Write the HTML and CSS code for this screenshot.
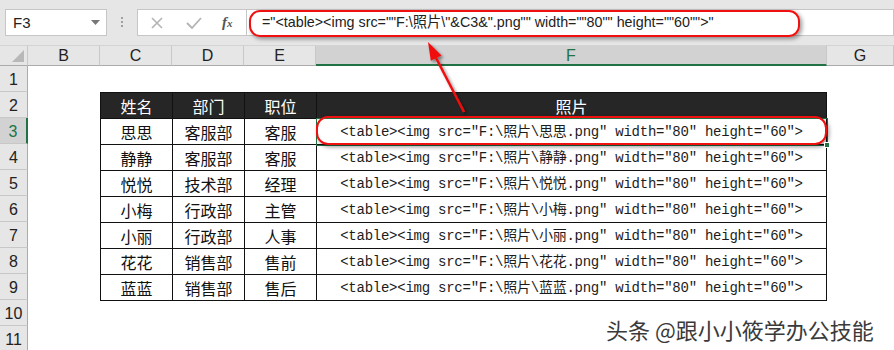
FILE: index.html
```html
<!DOCTYPE html>
<html lang="zh-CN">
<head>
    <meta charset="UTF-8">
    <title>照片路径公式</title>
    <link rel="stylesheet" href="styles.css">
</head>
<body>

    <!-- 编辑栏 -->
    <div class="toolbar">
        <div class="namebox">
            <span>F3</span>
            <svg class="dropdown" width="9" height="5" viewBox="0 0 9 5"><path d="M0 0 L9 0 L4.5 5 Z" fill="#777"/></svg>
        </div>
        <div class="grip"><span></span><span></span><span></span></div>
        <div class="fx-buttons">
            <svg class="btn-cancel" width="12" height="12" viewBox="0 0 12 12"><path d="M1 1 L11 11 M11 1 L1 11" stroke="#b4b4b4" stroke-width="1.6" fill="none"/></svg>
            <svg class="btn-enter" width="16" height="12" viewBox="0 0 16 12"><path d="M1 6 L6 11 L15 1" stroke="#b4b4b4" stroke-width="1.8" fill="none"/></svg>
            <span class="fx">f<small>x</small></span>
        </div>
        <div class="formula">
            <span class="formula-text">="&lt;table&gt;&lt;img src=""F:\照片\"&amp;C3&amp;".png"" width=""80"" height=""60""&gt;"</span>
            <div class="mark mark-formula"></div>
        </div>
    </div>

    <!-- 工作表 -->
    <div class="sheet">
        <div class="corner"><svg width="12" height="12" viewBox="0 0 12 12"><path d="M12 0 L12 12 L0 12 Z" fill="#b8b8b8"/></svg></div>
        <div class="col-head">B</div>
        <div class="col-head">C</div>
        <div class="col-head">D</div>
        <div class="col-head">E</div>
        <div class="col-head selected">F</div>
        <div class="col-head">G</div>

        <div class="row-head">1</div>
        <div class="row-head">2</div>
        <div class="row-head selected">3</div>
        <div class="row-head">4</div>
        <div class="row-head">5</div>
        <div class="row-head">6</div>
        <div class="row-head">7</div>
        <div class="row-head">8</div>
        <div class="row-head">9</div>
        <div class="row-head">10</div>
        <div class="row-head">11</div>

        <table class="data">
            <colgroup>
                <col class="c-name"><col class="c-dept"><col class="c-pos"><col class="c-photo">
            </colgroup>
            <tr class="head">
                <td>姓名</td><td>部门</td><td>职位</td><td>照片</td>
            </tr>
            <tr>
                <td>思思</td><td>客服部</td><td>客服</td>
                <td class="code active">&lt;table&gt;&lt;img src="F:\照片\思思.png" width="80" height="60"&gt;<div class="mark mark-cell"></div><div class="handle"></div></td>
            </tr>
            <tr>
                <td>静静</td><td>客服部</td><td>客服</td>
                <td class="code">&lt;table&gt;&lt;img src="F:\照片\静静.png" width="80" height="60"&gt;</td>
            </tr>
            <tr>
                <td>悦悦</td><td>技术部</td><td>经理</td>
                <td class="code">&lt;table&gt;&lt;img src="F:\照片\悦悦.png" width="80" height="60"&gt;</td>
            </tr>
            <tr>
                <td>小梅</td><td>行政部</td><td>主管</td>
                <td class="code">&lt;table&gt;&lt;img src="F:\照片\小梅.png" width="80" height="60"&gt;</td>
            </tr>
            <tr>
                <td>小丽</td><td>行政部</td><td>人事</td>
                <td class="code">&lt;table&gt;&lt;img src="F:\照片\小丽.png" width="80" height="60"&gt;</td>
            </tr>
            <tr>
                <td>花花</td><td>销售部</td><td>售前</td>
                <td class="code">&lt;table&gt;&lt;img src="F:\照片\花花.png" width="80" height="60"&gt;</td>
            </tr>
            <tr>
                <td>蓝蓝</td><td>销售部</td><td>售后</td>
                <td class="code">&lt;table&gt;&lt;img src="F:\照片\蓝蓝.png" width="80" height="60"&gt;</td>
            </tr>
        </table>
    </div>

    <!-- 标注箭头 -->
    <svg class="arrow" width="894" height="350" viewBox="0 0 894 350">
        <defs>
            <filter id="shadow" x="-50%" y="-50%" width="200%" height="200%">
                <feDropShadow dx="2" dy="2" stdDeviation="1.5" flood-color="#000" flood-opacity="0.45"/>
            </filter>
        </defs>
        <g filter="url(#shadow)">
            <line x1="464" y1="112" x2="433" y2="52" stroke="#f01010" stroke-width="2.5"/>
            <path d="M428 42 L441.5 55.4 L430.8 60.8 Z" fill="#f01010"/>
        </g>
    </svg>

    <div class="watermark">头条 @跟小小筱学办公技能</div>

</body>
</html>
```

FILE: styles.css
```css
* {
    box-sizing: border-box;
}
body {
    margin: 0;
    width: 894px;
    height: 350px;
    overflow: hidden;
    position: relative;
    background: #fff;
    font-family: "Liberation Sans", "Noto Sans CJK SC", sans-serif;
    color: #222;
}

/* 编辑栏 */
.toolbar {
    height: 45px;
    background: #e6e6e6;
    display: flex;
    align-items: flex-start;
    padding: 9px 0 0 5px;
}
.namebox {
    width: 102px;
    height: 27px;
    background: #fff;
    border: 1px solid #c6c6c6;
    display: flex;
    align-items: center;
    justify-content: space-between;
    padding: 0 6px 0 7px;
    font-size: 15px;
}
.grip {
    width: 30px;
    height: 27px;
    display: flex;
    flex-direction: column;
    align-items: center;
    gap: 2px;
    padding-top: 8px;
}
.grip span {
    width: 2px;
    height: 2px;
    background: #a0a0a0;
}
.fx-buttons {
    width: 110px;
    height: 27px;
    background: #fff;
    border: 1px solid #c6c6c6;
    display: flex;
    align-items: center;
    padding-left: 13px;
}
.btn-enter {
    margin-left: 23px;
}
.fx {
    margin-left: 20px;
    font-family: "Liberation Serif", serif;
    font-style: italic;
    font-weight: bold;
    font-size: 15px;
    color: #555;
}
.fx small {
    font-size: 11px;
}
.formula {
    flex: 1;
    height: 27px;
    background: #fff;
    border: 1px solid #c6c6c6;
    border-left: none;
    position: relative;
    padding-left: 15px;
    font-size: 14.3px;
    line-height: 25px;
    white-space: nowrap;
}

/* 红色标注框 */
.mark {
    position: absolute;
    border: 2.5px solid #f01010;
    border-radius: 11px;
    box-shadow: 2px 2px 4px rgba(0, 0, 0, 0.4);
    pointer-events: none;
}
.mark-formula {
    left: 2px;
    top: 0;
    width: 551px;
    height: 27px;
}
.mark-cell {
    left: -1px;
    top: -3px;
    right: -1px;
    bottom: -1px;
    border-radius: 12px;
    z-index: 2;
}

/* 工作表 */
.sheet {
    display: grid;
    grid-template-columns: 28px 72px 72px 72px 72px 511px 1fr;
    grid-template-rows: 21px repeat(11, 26px);
}
.corner {
    background: #e6e6e6;
    border-right: 1px solid #c8c8c8;
    border-bottom: 1px solid #ababab;
    border-top: 1px solid #d4d4d4;
    display: flex;
    align-items: flex-end;
    justify-content: flex-end;
    padding: 0 3px 3px 0;
}
.col-head {
    background: #e6e6e6;
    border-top: 1px solid #d4d4d4;
    border-right: 1px solid #c8c8c8;
    border-bottom: 1px solid #ababab;
    text-align: center;
    font-size: 16px;
    line-height: 20px;
    color: #222;
}
.col-head.selected {
    background: #d2d2d2;
    border-bottom: 2px solid #217346;
    color: #217346;
}
.row-head {
    grid-column: 1;
    background: #e6e6e6;
    border-right: 1px solid #ababab;
    border-bottom: 1px solid #c8c8c8;
    text-align: center;
    font-size: 16px;
    line-height: 28px;
    color: #222;
}
.row-head.selected {
    background: #d2d2d2;
    border-right: 2px solid #217346;
    color: #217346;
}

/* 数据表 */
.data {
    grid-column: 3 / 7;
    grid-row: 3 / 11;
    border-collapse: collapse;
    table-layout: fixed;
    width: 727px;
    height: 208px;
    font-family: "Noto Sans CJK SC", sans-serif;
    font-size: 16px;
}
.c-name, .c-dept, .c-pos {
    width: 72px;
}
.data td {
    border: 1px solid #111;
    padding: 0;
    height: 26px;
    line-height: 24px;
    text-align: center;
    white-space: nowrap;
    color: #111;
}
.data .head td {
    background: #262626;
    color: #fff;
    border-color: #111;
}
.data td.code {
    font-family: "Liberation Mono", "Noto Sans CJK SC", monospace;
    font-size: 14px;
    letter-spacing: -0.25px;
    color: #1c1c1c;
}
.data td.active {
    position: relative;
    outline: 1px solid #217346;
}
.handle {
    position: absolute;
    right: -4px;
    bottom: -4px;
    width: 6px;
    height: 6px;
    background: #217346;
    border: 1px solid #fff;
    z-index: 3;
}

/* 箭头与水印 */
.arrow {
    position: absolute;
    left: 0;
    top: 0;
    pointer-events: none;
}
.watermark {
    position: absolute;
    left: 606px;
    top: 313px;
    font-family: "Noto Sans CJK SC", sans-serif;
    font-size: 22px;
    color: #3a3a3a;
    text-shadow: 0 0 2px #fff, 0 0 2px #fff, 1px 1px 1px #fff;
    white-space: nowrap;
}
```
